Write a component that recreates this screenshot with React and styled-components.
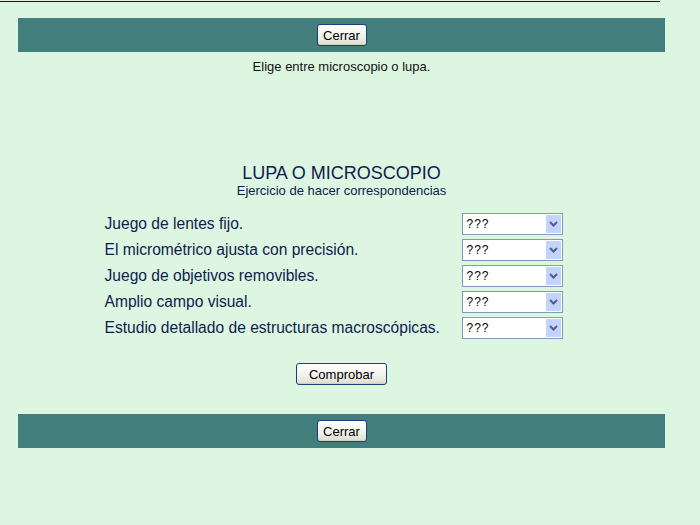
import React from "react";
import styled, { createGlobalStyle } from "styled-components";

const Global = createGlobalStyle`
  html, body { margin: 0; padding: 0; background: #ddf6e1; }
  body { font-family: "Liberation Sans", Arial, sans-serif; width: 700px; height: 525px; overflow: hidden; }
`;

const TopRule = styled.div`
  width: 660px;
  height: 1px;
  margin-top: 1px;
  background: #1a1a1a;
`;

const Page = styled.div`
  width: 647px;
  margin: 16px 0 0 18px;
  display: flex;
  flex-direction: column;
  align-items: center;
`;

const Bar = styled.div`
  width: 100%;
  height: 34px;
  background: #427e7b;
  display: flex;
  align-items: center;
  justify-content: center;
`;

const Button = styled.button`
  font-family: "Liberation Sans", Arial, sans-serif;
  font-size: 13px;
  color: #000;
  height: 22px;
  width: ${(p) => p.$w}px;
  padding: 0;
  border: 1px solid #1c3f7a;
  border-radius: 3px;
  background: linear-gradient(#ffffff, #f1f1ea 60%, #dcdcd2);
  box-shadow: inset 0 -1px 0 #d6d0c4;
`;

const Intro = styled.div`
  font-size: 13px;
  color: #111;
  margin-top: 8px;
  height: 14px;
  line-height: 14px;
`;

const Title = styled.div`
  margin-top: 89px;
  font-size: 18px;
  color: #0e1c4e;
  line-height: 20px;
`;

const Subtitle = styled.div`
  font-size: 13px;
  color: #0e1c4e;
  line-height: 16px;
`;

const Table = styled.div`
  margin-top: 14px;
  margin-left: -16px;
  display: grid;
  grid-template-columns: 357px 101px;
  row-gap: 4px;
  align-items: center;
`;

const Label = styled.div`
  font-size: 15.6px;
  color: #0e1c4e;
  line-height: 22px;
  white-space: nowrap;
`;

const SelectBox = styled.div`
  width: 101px;
  height: 22px;
  box-sizing: border-box;
  border: 1px solid #7f9db9;
  background: #fff;
  display: flex;
  align-items: center;
`;

const Value = styled.span`
  font-size: 12px;
  color: #000;
  padding-left: 4px;
  flex: 1;
  letter-spacing: 1px;
`;

const Arrow = styled.span`
  width: 15px;
  height: 18px;
  margin-right: 1px;
  background: #c3d3fb;
  display: flex;
  align-items: center;
  justify-content: center;
`;

const Check = styled.div`
  margin-top: 24px;
`;

const BottomBar = styled(Bar)`
  margin-top: 29px;
`;

const rows = [
  "Juego de lentes fijo.",
  "El micrométrico ajusta con precisión.",
  "Juego de objetivos removibles.",
  "Amplio campo visual.",
  "Estudio detallado de estructuras macroscópicas.",
];

function Select() {
  return (
    <SelectBox>
      <Value>???</Value>
      <Arrow>
        <svg width="9" height="6" viewBox="0 0 9 6">
          <path d="M1 1 L4.5 4.5 L8 1" fill="none" stroke="#4d6185" strokeWidth="2" />
        </svg>
      </Arrow>
    </SelectBox>
  );
}

export default function App() {
  return (
    <>
      <Global />
      <TopRule />
      <Page>
        <Bar>
          <Button $w={50}>Cerrar</Button>
        </Bar>
        <Intro>Elige entre microscopio o lupa.</Intro>
        <Title>LUPA O MICROSCOPIO</Title>
        <Subtitle>Ejercicio de hacer correspondencias</Subtitle>
        <Table>
          {rows.map((r) => (
            <React.Fragment key={r}>
              <Label>{r}</Label>
              <Select />
            </React.Fragment>
          ))}
        </Table>
        <Check>
          <Button $w={91}>Comprobar</Button>
        </Check>
        <BottomBar>
          <Button $w={50}>Cerrar</Button>
        </BottomBar>
      </Page>
    </>
  );
}
